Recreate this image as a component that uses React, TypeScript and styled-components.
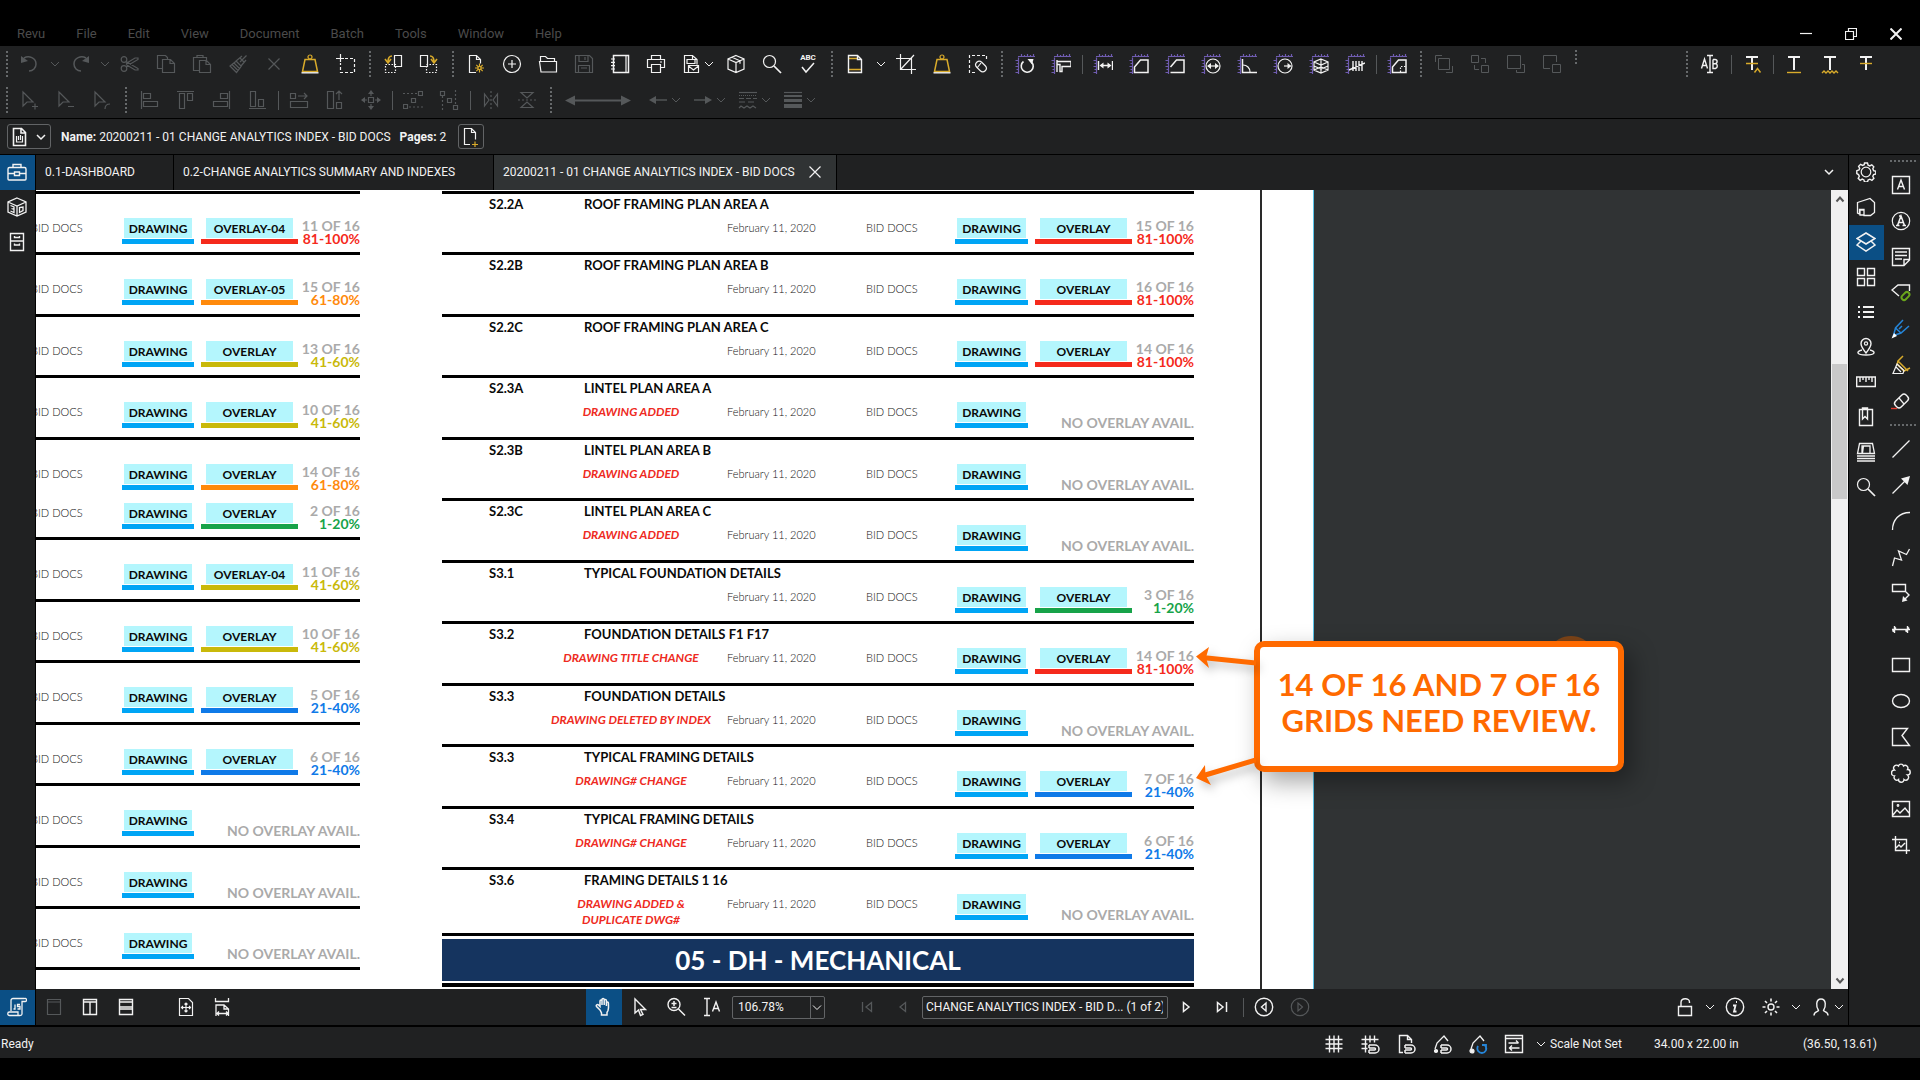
import React from 'react';
import styled, { createGlobalStyle, css } from 'styled-components';

const GOLD = '#d9ab2b';
const PURPLE = '#6f5cb0';
const DIM = '#55585a';

const GlobalStyle = createGlobalStyle`
  * { box-sizing: border-box; }
  body { margin: 0; background: #000; }
  button, input, select { font: inherit; color: inherit; }
`;

/* ---------- drawings ---------- */

const ruler = (
  <path
    stroke={PURPLE}
    strokeWidth="1.2"
    d="M3.5 20V3.5M3 2.5h17M0.5 6.5h3M1.5 9.5h2M0.5 12.5h3M1.5 15.5h2M0.5 18.5h3M6.5 0v2.500M9.500 1v1.500M12.500 0v2.500M15.500 1v1.500M18.500 0v2.500"
  />
);
const weight = (
  <>
    <path stroke={GOLD} strokeWidth="1.5" d="M5 5.500h10l2.500 12h-15z" />
    <circle stroke={GOLD} cx="10" cy="3" r="2" />
    <path strokeWidth="1.400" d="M1.500 18.800h17" />
  </>
);
const cursor = 'M3 2v14l4-4h6z';
const magnet = <path strokeWidth="1.500" d="M9 11h6a3.500 3.500 0 0 1 0 8H9M9 14h5.500a1 1 0 0 1 0 2H9M9 11v3M9 16v3" />;
const smallChevron = (x: number) => <path strokeWidth="1" d={`M${x} 8l4 4 4-4`} />;

const icons: Record<string, React.ReactNode> = {
  undo: <><path strokeWidth="1.500" d="M4 4c5-3 12 0 12 6 0 4-3 7-7 7" /><path fill="currentColor" stroke="none" d="M1 2v7l7-2z" /></>,
  redo: <><path strokeWidth="1.500" d="M16 4c-5-3-12 0-12 6 0 4 3 7 7 7" /><path fill="currentColor" stroke="none" d="M19 2v7l-7-2z" /></>,
  chevron: <path strokeWidth="1" d="M6 8l4 4 4-4" />,
  chevronBold: <path strokeWidth="1.500" d="M6 8l4 4 4-4" />,
  cut: <><circle cx="4" cy="5.500" r="2.800" /><circle cx="4" cy="14.500" r="2.800" /><path d="M6 7.500l12 7v1.500h-3L6 10.500M6 12.500l12-7V4h-3L6 9.500" /></>,
  copy: <path d="M6.500 14.500h-5v-13h8l2 2v2M6.500 5.500h8l4 4v9h-12zM14 5.500v4h4" />,
  paste: <path d="M7 16.500H1.500v-13H5V1.500h6v2h3.500V6M5 3.500h6M7.500 6.500h7l4 4v8h-11zM14 6.500v4h4" />,
  brush: <path d="M18.500 1.500L12 8M14 2L8 7l5 5 5-6M9 6.500L2 12l6.500 6.500L13.500 12M4 10.500l6 6M6 9l6 6M12 4l4 4" />,
  close: <path d="M4.500 4.500l11 11M15.500 4.500l-11 11" />,
  weight,
  snapshot: <><path d="M4.500 0v8M0 4.500h8" /><path strokeDasharray="3 2" d="M9 4.500h9.500v14h-14V9" /></>,
  sendBack: <><path d="M11.500 1.500h7v11h-7z" /><path strokeDasharray="1.500 1.500" d="M2.500 10.500h10v8h-10z" /><path stroke={GOLD} strokeWidth="1.600" d="M9 2C6 2 5 4 5 8M2 5l3 4 3-4" /></>,
  bringFront: <><path d="M1.500 1.500h7v11h-7z" /><path strokeDasharray="1.500 1.500" d="M7.500 10.500h10v8h-10z" /><path stroke={GOLD} strokeWidth="1.600" d="M11 2c3 0 4 2 4 6M12 5l3 4 3-4" /></>,
  newDoc: <><path d="M10 18.500H3.500v-17h7l4 4v4M10.500 1.500v4h4" /><path stroke={GOLD} d="M13.500 9.500v9M9 14h9M10.300 10.800l6.400 6.400M16.700 10.800l-6.400 6.400" /><circle fill="#202122" stroke={GOLD} cx="13.500" cy="14" r="1.600" /></>,
  plusCircle: <><circle cx="10" cy="10" r="8.500" /><path d="M10 6v8M6 10h8" /></>,
  folder: <path d="M2.500 7.500v-5h5l2 2h7v3M1.500 7.500h17v10.500h-15.500z" />,
  save: <path d="M1.500 1.500h14l3 3v14h-17zM5 1.500v6h9v-6M11 3v3M4.500 18.500v-7h11v7M7 14h6" />,
  notebook: <><path strokeWidth="1.500" d="M3.500 1.500h15v17h-15z" /><path d="M16 1.500v17M1 5h4M1 8.300h4M1 11.600h4M1 15h4" /></>,
  print: <path d="M5.500 6V1.500h9V6M5 13.500H1.500v-8h17v8H15M5.500 10.500h9v8h-9zM14 8h2" />,
  cube: <path d="M10 1.500l8 3.500v10l-8 3.500L2 15V5zM2 5l8 3.500L18 5M10 8.500v10M6 3.300l8 3.500v3" />,
  search: <><circle cx="7.500" cy="7.500" r="6" /><path strokeWidth="1.700" d="M12 12l7 7" /></>,
  spell: <path strokeWidth="1.500" d="M5 13l4 5 8-9" />,
  pageSetup: <><path stroke={GOLD} strokeWidth="1.600" d="M4 4.500h8M4 15.500h12" /><path strokeWidth="1.400" d="M3.500 1.500h9l4 4v13h-13zM12.500 1.500v4h4" /></>,
  crop: <path d="M4.500 0v15.500H20M0 4.500h15.500V20M5 15L18 1" />,
  eraseContent: <><path strokeDasharray="3 2" d="M7 18.500H1.500v-17h17V6" /><rect x="7" y="9" width="12" height="7" rx="3.500" transform="rotate(45 13 12.500)" /><path d="M13 9l-4 5" /></>,
  mRotate: <>{ruler}<path strokeWidth="1.600" d="M8.500 7.500a6 6 0 1 0 8 .5" /><path fill="currentColor" stroke="none" d="M12.500 5h6l-1.500 5.500z" /></>,
  mCaliper: <>{ruler}<path strokeWidth="1.400" d="M6 7.500h14v5H11v5h-2v-7H6M6 6v12" /></>,
  mLength: <>{ruler}<path strokeWidth="1.400" d="M5.500 7v9M19.500 7v9M8 11.500h9" /><path fill="currentColor" stroke="none" d="M6.500 11.500l4-3v6zM18.500 11.500l-4-3v6z" /></>,
  mArea: <>{ruler}<path strokeWidth="1.500" d="M5.500 18.500V13l6-7h7.500v12.500z" /></>,
  mPolyline: <>{ruler}<path strokeWidth="1.500" d="M5.500 13l6-7h7.500v12.500H5.500" /></>,
  mDiameter: <>{ruler}<circle cx="12" cy="12" r="7" /><path d="M7 12h10" /><path fill="currentColor" stroke="none" d="M6 12l4-3v6zM18 12l-4-3v6z" /></>,
  mAngle: <>{ruler}<path strokeWidth="1.500" d="M5.500 5v13.500H20" /><path d="M6 11c4 0 7 3 7 7" /></>,
  mRadius: <>{ruler}<circle cx="12" cy="12" r="7" /><path d="M11 12h5" /><path fill="currentColor" stroke="none" d="M18.500 12l-4-3v6z" /></>,
  mVolume: <>{ruler}<path d="M12 5l7 3v8l-7 3-7-3V8zM5 8l7 3 7-3M12 5v14M5 12l7 3 7-3M5 16l7-3 7 3" /></>,
  mCount: <>{ruler}<path strokeWidth="1.400" d="M8 7v10M11 7v10M14 7v10M17 7v10M4 16l16-7" /></>,
  mCutout: <>{ruler}<path strokeWidth="1.500" d="M5.500 18.500V13l6-7h7.500v12.500z" /><path strokeDasharray="1.500 1.500" d="M13.500 18v-5.500H19" /></>,
  bringForward: <path strokeWidth="1" d="M4.500 4.500h11v11h-11zM1.500 8V1.500H8M12 18.500h6.500V12" />,
  sendBackward: <path strokeWidth="1" d="M1.500 1.500h7v7h-7zM11.500 11.500h7v7h-7zM11 4.500h4.500V9M4.500 11v4.500H9" />,
  toFront: <path strokeWidth="1" d="M1.500 1.500h13v13h-13zM16 10.500h2.500v8h-8V16" />,
  toBack: <path strokeWidth="1" d="M14.500 8V1.500h-13v13H8M10.500 10.500h8v8h-8z" />,
  editText: <path strokeWidth="1.400" d="M7 1.500h6M7 18.500h6M10 1.500v17M1.500 14.500L4.500 5l3 9.500M2.500 11.500h4M13 5.500v9h2.500a2.500 2.500 0 0 0 0-4.800H13M15 9.700a2 2 0 0 0 0-4.200h-2" />,
  tReplace: <><path strokeWidth="2" d="M4 3h12M10 3v13" /><path stroke={GOLD} strokeWidth="1.400" d="M4 9.500h12M12.500 18.500l3-4 3 4" /></>,
  tUnder: <><path strokeWidth="2" d="M4 3h12M10 3v13" /><path stroke={GOLD} strokeWidth="1.400" d="M3 18.500h14" /></>,
  tSquiggle: <><path strokeWidth="2" d="M4 3h12M10 3v13" /><path stroke={GOLD} strokeWidth="1.400" d="M2 19l2-2 2 2 2-2 2 2 2-2 2 2 2-2 2 2" /></>,
  tStrike: <><path strokeWidth="2" d="M4 3h12M10 3v13" /><path stroke={GOLD} strokeWidth="1.400" d="M4 9.500h12" /></>,
  curPlus: <path d={`${cursor}M12 16.500h6M15 13.500v6`} />,
  curMinus: <path d={`${cursor}M12 16.500h6`} />,
  curLasso: <path d={`${cursor}M13 19c0-3 2-5 5-5`} />,
  alignLeft: <path d="M2.500 1v18M4.500 3.500h7v5h-7zM4.500 11.500h14v5h-14z" />,
  alignTop: <path d="M2 1.500h17M4.500 3.500h5v15h-5zM12.500 3.500h5v7h-5z" />,
  alignRight: <path d="M18.500 1v18M9.500 3.500h7v5h-7zM2.500 11.500h14v5h-14z" />,
  alignBottom: <path d="M2 18.500h17M3.500 1.500h5v15h-5zM11.500 9.500h5v7h-5z" />,
  sameWidth: <path d="M1.500 3.500h5v5h-5zM1.500 11.500h17v6h-17zM9 6h9M15 3l3 3-3 3" />,
  sameHeight: <path d="M2.500 1.500h6v17h-6zM11.500 12.500h5v6h-5zM14 10V1M11 4l3-3 3 3" />,
  moveAll: <><path d="M7.500 7.500h5v5h-5zM10 6V2M10 14v4M6 10H2M14 10h4" /><path fill="currentColor" stroke="none" d="M10 0l3 4H7zM10 20l3-4H7zM0 10l4-3v6zM20 10l-4-3v6z" /></>,
  distH: <><path d="M15.500 1.500h4v4h-4zM8.500 8.500h4v4h-4zM.5 14.500h4v4h-4z" /><path strokeDasharray="2 2" d="M0 3.500h15M6 17h14" /></>,
  distV: <><path d="M1.500 1.500h4v4h-4zM8.500 8.500h4v4h-4zM14.500 15.500h4v4h-4z" /><path strokeDasharray="2 2" d="M3.500 6v14M16.500 0v15" /></>,
  flipH: <><path d="M3.500 4v12L8 10zM16.500 4v12L12 10z" /><path strokeDasharray="2 2" d="M10 1v18" /></>,
  flipV: <><path d="M4 2.500h12L10 8zM4 17.500h12L10 12z" /><path strokeDasharray="2 2" d="M1 10h18" /></>,
  fileInfo: <><path strokeWidth="1.600" d="M4.500 1.500h8l4 4v13h-12zM12 1.500v4.500h4" /><path d="M7.500 9v6h6V9M9.500 9v4M11.500 8v5" /></>,
  addPage: <><path d="M10 17.500H4.500v-16h7l4 4v7M11.500 1.500v4h4" /><path stroke={GOLD} d="M12 17.500h6M15 14.500v6" /></>,
  briefcase: <path strokeWidth="1.400" d="M2.500 5.500h15a1.500 1.500 0 0 1 1.500 1.500v10a1 1 0 0 1-1 1H2a1 1 0 0 1-1-1V7a1.500 1.500 0 0 1 1.500-1.500zM6 5V2.500h8V5M1 11.500h6.500M12.500 11.500H19M7.500 10h5v3.500h-5z" />,
  model3d: <path strokeWidth="1.300" d="M10 1l9 4v10l-9 4-9-4V5zM1 5l9 4 9-4M10 9v10M3.500 8.500L7 10v5.500L3.500 14M4.500 11.500l2.500 1M12.500 10.500v5l3.500-2V10z" />,
  cabinet: <path strokeWidth="1.400" d="M3.500 1.500h13v17h-13zM3.500 9h13M7.500 4v1.500h5V4M7.500 11.500V13h5v-1.500" />,
  script: <path strokeWidth="1.300" d="M4 14V3.500C4 2 5 1.500 6 1.500h11.500a1.500 1.500 0 0 1 1 3H15V17c0 1-1 1.500-2 1.500H2.500a1.500 1.500 0 0 1 0-3.500H11v3M8 7.500V12H6.500M13 7.500h-2.500v2H13V12h-2.500" />,
  gear: <><circle cx="10" cy="10" r="4.800" /><path strokeWidth="1.400" d="M8.500 1h3l.6 2.200 1.700.7 2-1.100 2 2-1 2 .8 1.800 2.200.6v2.800l-2.200.6-.8 1.700 1.100 2-2 2-2-1.100-1.800.8-.6 2h-3l-.6-2.100-1.700-.8-2 1.200-2-2 1.100-2-.8-1.700L.8 11.500V8.700L3 8l.7-1.700-1.100-2 2-2 2 1.100 1.600-.7z" /></>,
  properties: <path strokeWidth="1.300" d="M1.500 5.500L14 1.500l4.500 4v10l-4 3H8v-6H3.500V17l-2-1zM4 13h4v5H4z" />,
  layers: <path strokeWidth="1.500" d="M10 1l9 5.500-9 5.500-9-5.500zM4.500 9.500L1 13l9 6 9-6-3.500-3.500" />,
  thumbs: <path strokeWidth="1.400" d="M1.500 1.500h7v7h-7zM11.500 1.500h7v7h-7zM1.500 11.500h7v7h-7zM11.500 11.500h7v7h-7z" />,
  list: <path strokeWidth="2" d="M2 5h2M2 10h2M2 15h2M7 5h11M7 10h11M7 15h11" />,
  pin: <><path strokeWidth="1.400" d="M10 16C6 11 5 9 5 6.500a5 5 0 0 1 10 0C15 9 14 11 10 16zM6 13c-6 1.500-6 5 4 5s10-3.500 4-5" /><circle cx="10" cy="6.500" r="1.600" /></>,
  measure: <path strokeWidth="1.400" d="M.7 5h18.600v9.500H.7zM4 5v5M7 5v3M10 5v5M13 5v3M16 5v5" />,
  bookmark: <path strokeWidth="1.400" d="M3.500 2.500h13v16h-13zM6.500 1v11l2.500-2.500 2.500 2.500V1z" />,
  stack: <path strokeWidth="1.300" d="M3.500 1.500h13l2 10h-17zM6 11V4h8v7M7.500 4l-1 7M1 14h18M1 16.500h18M1 19h18" />,
  textBox: <path strokeWidth="1.400" d="M1.500 1.500h17v17h-17zM6.500 14.500L10 5l3.500 9.500M7.700 11.500h4.600" />,
  typewriter: <><circle cx="10" cy="10" r="8.700" /><path strokeWidth="1.500" d="M6.500 14.500L10 5l3.500 9.500M7.700 11.500h4.600M5 14.500h3.500M11.500 14.500H15M8 5h2" /></>,
  note: <path strokeWidth="1.400" d="M1.500 1.500h17V13l-5.500 5.500H1.500zM18 12.500h-5V18M4 5h12M4 8.500h12M4 12h7" />,
  tag: <><path strokeWidth="1.400" d="M18.500 8V2H7L1 7l7 6" /><rect stroke="#6aa51c" strokeWidth="2" x="10" y="10.500" width="9" height="5" rx="2.500" transform="rotate(-45 14.500 13)" /></>,
  pen: <><path stroke="#2585d8" strokeWidth="1.500" d="M12 1L4.500 9l-2 7.500L10 14l8-7M4.500 9L10 14M8 10l3-3" /><path fill="#fff" stroke="none" d="M3 14l3 3-5.500 2.500z" /></>,
  highlighter: <><path stroke={GOLD} strokeWidth="1.500" d="M12 1L7 6l10 10M7 6l-1 4M19 13l-6 3L6 9" /><path d="M6 9l-4 9.500h10l1-3zM5 12l5 5" /></>,
  eraser: <><rect strokeWidth="1.400" x="3" y="6" width="15" height="8" rx="3" transform="rotate(-45 10.500 10)" /><path d="M8 7l5 6" /><path stroke="#e0392c" strokeWidth="1.400" d="M0 17.500h6" /></>,
  line: <path strokeWidth="1.300" d="M1.500 18.500l17-17" />,
  arrow: <><path strokeWidth="1.300" d="M1.500 18.500L14 6" /><path fill="currentColor" stroke="none" d="M19 1l-2.500 9-6.500-6.500z" /></>,
  arc: <path strokeWidth="1.300" d="M1.500 19C1.500 9 8 1.500 19 1.500" />,
  polyline: <path strokeWidth="1.300" d="M1.500 19l2-8 7 2-3-9 8 3.500L18.500 2" />,
  callout: <><path strokeWidth="1.400" d="M1.500 1.500h13v7h-13zM15 9l3 3-4 4" /><path fill="currentColor" stroke="none" d="M11 19l1-6 4.500 4.500z" /></>,
  dimension: <path strokeWidth="1.400" d="M1 10.500h18M3.500 7v7M16.500 7v7M1.500 12.500L5 8.500M14.500 12.500L18 8.500" />,
  rect: <path strokeWidth="1.400" d="M1.500 3.500h17v13h-17z" />,
  ellipse: <ellipse strokeWidth="1.400" cx="10" cy="10" rx="8.500" ry="6.500" />,
  polygon: <path strokeWidth="1.400" d="M1.500 1.500h15l-5.500 7 7.500 10h-17z" />,
  cloud: <path strokeWidth="1.400" d="M7.500 3a2.600 2.600 0 0 1 5 0 2.700 2.700 0 0 1 4 3.500 2.600 2.600 0 0 1 0 5.500 2.700 2.700 0 0 1-3.500 4.500 2.600 2.600 0 0 1-5.500 0A2.700 2.700 0 0 1 3.500 13a2.600 2.600 0 0 1 0-6 2.700 2.700 0 0 1 4-4z" />,
  image: <><path strokeWidth="1.400" d="M1.500 2.500h17v15h-17zM2 16l4-5 3 3 5-5 4 5" /><circle cx="7" cy="6.500" r=".8" /></>,
  imageCrop: <path strokeWidth="1.400" d="M4.500 1v14.500H19M1 4.500h14.500V19M5 13l3-3 2 2 4-4M8 7.500h1" />,
  single: <path d="M3.500 2.500h13v15h-13zM3.500 5h13" />,
  splitV: <path strokeWidth="1.400" d="M3.500 2.500h13v15h-13zM3.500 5h13M10 5v12.500" />,
  splitH: <path strokeWidth="1.400" d="M3.500 2.500h13v15h-13zM3.500 5h13M3.500 10h13M3.500 12h13" />,
  fitPage: <path d="M3.500 1.500h9l4 4v13h-13zM10 6v9M5.500 10.500h9M8.500 7.500L10 6l1.500 1.500M8.500 13.500L10 15l1.500-1.500M7 9l-1.500 1.500L7 12M13 9l1.500 1.500L13 12" />,
  fitWidth: <path strokeWidth="1.300" d="M3.500 1v3.500h13V1M4 19V8h8l4.500 4v7M12 8v4h4M5 16.500h11M7 14.500l-2 2 2 2M14 14.500l2 2-2 2" />,
  hand: <path strokeWidth="1.500" d="M6 13L2.500 9.500c-1-1.500 1-2.500 2-1.500L6 9.500V4c0-1.500 2-1.500 2 0v4-5.500c0-1.500 2.200-1.500 2.200 0V8 3.500c0-1.500 2.200-1.500 2.200 0V9 6c0-1.500 2-1.500 2 0 0 3 .6 4.500-.4 7.500l-1 2V18H7.500v-2z" />,
  pointer: <path strokeWidth="1.400" d="M5 2v14l3.500-3 2 5.500 2.500-1-2.500-5h5z" />,
  zoom: <><circle strokeWidth="1.400" cx="8" cy="7.500" r="6" /><path strokeWidth="1.500" d="M12.500 12l6.500 6.500M5.500 6.500h5M8 4v5M5.500 10.500h5" /></>,
  textSelect: <path strokeWidth="1.400" d="M2 1.500h6M2 18.500h6M5 1.500v17M10.500 14.500l3.500-9.500 3.500 9.500M11.700 11.500h4.600" />,
  first: <path strokeWidth="1.300" d="M5.500 5v10M14.500 5.500v9L9 10z" />,
  prev: <path strokeWidth="1.300" d="M12.500 5.500v9L7 10z" />,
  next: <path strokeWidth="1.500" d="M7.500 5.500v9L13 10z" />,
  last: <path strokeWidth="1.500" d="M14.500 5v10M5.500 5.500v9L11 10z" />,
  back: <><circle strokeWidth="1.400" cx="10" cy="10" r="8.700" /><path strokeWidth="1.400" d="M12 6v8l-4.500-4z" /></>,
  forward: <><circle cx="10" cy="10" r="8.700" /><path d="M8 6v8l4.500-4z" /></>,
  unlock: <path strokeWidth="1.400" d="M3.500 9.500h13v9h-13zM6 9V5.500c0-5 8.500-5 8.500-.5v1" />,
  info: <><circle strokeWidth="1.400" cx="10" cy="10" r="8.700" /><path strokeWidth="1.800" d="M8 8.500h2.500L9 14.500h2.500M11 5h1" /></>,
  sun: <><circle strokeWidth="1.400" cx="10" cy="10" r="3" /><path strokeWidth="1.600" d="M10 1.500v3M10 15.500v3M1.500 10h3M15.500 10h3M4 4l2 2M14 14l2 2M16 4l-2 2M6 14l-2 2" /></>,
  grid: <path strokeWidth="1.400" d="M5.500 1.500v17M10 1.500v17M14.500 1.500v17M1.500 5.500h17M1.500 10h17M1.500 14.500h17" />,
  snapGrid: <><path strokeWidth="1.400" d="M5.500 1.500v17M10 1.500v7M14.500 1.500v7M1.500 5.500h17M1.500 10h6M1.500 14.500h6" />{magnet}</>,
  snapPage: <><path strokeWidth="1.400" d="M7 18.500H3.500v-17h8l4 4V9M11.500 1.500v4h4" />{magnet}</>,
  snapMarkup: <><path strokeWidth="1.300" d="M3 15l2-6 7-7 4 5M2 17h4" /><circle fill="currentColor" cx="4" cy="17" r="1.500" />{magnet}</>,
  reuse: <><path strokeWidth="1.300" d="M3 15l2-6 7-7 4 5" /><circle fill="currentColor" cx="4" cy="17" r="2" /><path stroke="#2585d8" strokeWidth="1.800" d="M10 12c-2 4 1 7 4 7s6-4 3-7.500M14 11h4v4" /></>,
  sync: <path strokeWidth="1.400" d="M1.500 1.500h17v17h-17zM1.500 4.500h17M4.500 9h10M12 6.500L14.500 9M15.500 14h-10M8 11.500L5.500 14 8 16.500" />,
};

const wideIcons: Record<string, React.ReactNode> = {
  pdfMail: <><path d="M18 18.500h-7.500v-17h8l4.500 4v5M18.500 1.500v4h4M13 5.500h8v4h-8zM14.500 11.500h10v7h-10zM14.500 12l5 4 5-4" />{smallChevron(31)}</>,
  lineLeft: <><path strokeWidth="1.400" d="M13 10h14" /><path fill="currentColor" stroke="none" d="M9 10l7-4v8z" />{smallChevron(32)}</>,
  lineRight: <><path strokeWidth="1.400" d="M9 10h14" /><path fill="currentColor" stroke="none" d="M27 10l-7-4v8z" />{smallChevron(32)}</>,
  lineStyle: <><path d="M9 2.500h18" /><path strokeDasharray="1 1" d="M9 5.500h18" /><path strokeDasharray="5 2" d="M9 8.500h18" /><path strokeDasharray="6 3" d="M9 12h18" /><path d="M9 18l2-2 3 2 3-2 3 2 3-2 3 2" />{smallChevron(32)}</>,
  lineWidth: <><path d="M9 2.500h18" /><path strokeWidth="2" d="M9 6h18" /><path strokeWidth="3" d="M9 10.500h18" /><path strokeWidth="4" d="M9 16h18" />{smallChevron(32)}</>,
  user: <><path strokeWidth="1.400" d="M11 18.500c0-4 4-3.500 4.500-5C13 10 12.500 2 18 2s5 8 2.500 11.500c.5 1.500 4.500 1 4.500 5" />{smallChevron(32)}</>,
};

/* ---------- shared parts ---------- */

const Svg = styled.svg`
  display: block;
  flex: none;
  fill: none;
  stroke: currentColor;
  stroke-width: 1.2;
`;

/* The 35px buttons get one pixel of padding, so that the icon stays on whole pixels. */
const IconButton = styled.button<{ $w?: number; $h?: number; $dim?: boolean; $active?: boolean }>`
  display: flex;
  flex: none;
  align-items: center;
  justify-content: center;
  width: ${(p) => p.$w ?? 36}px;
  height: ${(p) => p.$h ?? 36}px;
  padding: 0 ${(p) => (p.$h === 35 ? 1 : 0)}px ${(p) => (p.$h === 35 ? 1 : 0)}px 0;
  border: 0;
  background: ${(p) => (p.$active ? '#0b4f85' : 'transparent')};
  color: ${(p) => (p.$dim ? DIM : '#f2f2f2')};
`;

type ToolProps = { name: string; w?: number; h?: number; dim?: boolean; active?: boolean };

function Tool({ name, w, h, dim, active }: ToolProps) {
  const wide = name in wideIcons;
  const isSpell = name === 'spell';
  const size = wide ? 45 : 20;
  return (
    <IconButton type="button" aria-label={name} $w={w ?? (wide ? 45 : 36)} $h={h} $dim={dim} $active={active}>
      {isSpell ? (
        <Spell>
          ABC
          <Svg width={16} height={12} viewBox="3 8 16 12">{icons.spell}</Svg>
        </Spell>
      ) : (
        <Svg width={size} height={20} viewBox={`0 0 ${size} 20`}>{wide ? wideIcons[name] : icons[name]}</Svg>
      )}
    </IconButton>
  );
}

const Spell = styled.span`
  display: flex;
  flex-direction: column;
  align-items: center;
  font: 700 8px/8px Roboto, sans-serif;
`;

const Grip = styled.span<{ $across?: boolean; $short?: boolean }>`
  flex: none;
  ${(p) =>
    p.$across
      ? css`width: 26px; height: 2px; margin: 5px auto;
          background: repeating-linear-gradient(90deg, #66696b 0 2px, transparent 2px 4px);`
      : css`width: 2px; height: ${p.$short ? 14 : 26}px; margin: 0 4px 0 5px;
          align-self: ${p.$short ? 'flex-start' : 'center'};
          background: repeating-linear-gradient(180deg, #66696b 0 2px, transparent 2px 4px);`}
`;

const Divider = styled.span`
  flex: none;
  width: 1px;
  height: 19px;
  margin: 0 2px 0 3px;
  background: #55585a;
`;

/** Expands a compact description: "|" divider, ":" grip, "~x" dimmed, "x@n" custom width. */
function Tools({ items, dim }: { items: string; dim?: boolean }) {
  return (
    <>
      {items.split(' ').map((raw, i) => {
        if (raw === '|') return <Divider key={i} />;
        if (raw === ':') return <Grip key={i} />;
        const [label, w] = raw.replace('~', '').split('@');
        return <Tool key={i} name={label} w={w ? Number(w) : undefined} dim={dim || raw.startsWith('~')} />;
      })}
    </>
  );
}

/* ---------- window frame ---------- */

const Window = styled.div`
  display: flex;
  flex-direction: column;
  height: 100vh;
  padding: 22px 0;
  overflow: hidden;
  background: #000;
  color: #f2f2f2;
  font: 12px/16px Roboto, sans-serif;
`;

const TitleBar = styled.header`
  display: flex;
  flex: none;
  align-items: center;
  justify-content: space-between;
  height: 24px;
`;

const Menu = styled.nav`
  display: flex;
  gap: 31px;
  padding-left: 17px;
`;

const MenuItem = styled.button`
  padding: 0;
  border: 0;
  background: none;
  color: #4b4b4b;
  font-size: 13px;
`;

const WindowButtons = styled.div`
  display: flex;
  gap: 9px;
  padding-right: 6px;
`;

const Toolbars = styled.div`
  flex: none;
  background: #202122;
  border-bottom: 1px solid #000;
`;

const ToolRow = styled.div`
  display: flex;
  align-items: center;
  height: 36px;
  padding-left: 1px;
`;

const GripSlot = styled.span`
  display: flex;
  align-self: stretch;
  padding-top: 4px;
`;

const TextTools = styled.div`
  display: flex;
  align-items: center;
  margin-left: auto;
  padding-right: 36px;
`;

const NameBar = styled.div`
  display: flex;
  flex: none;
  align-items: center;
  height: 36px;
  padding-left: 7px;
  background: #202122;
  border-bottom: 1px solid #000;
  white-space: pre;
`;

const Framed = styled.button<{ $w: number }>`
  display: flex;
  align-items: center;
  justify-content: space-between;
  width: ${(p) => p.$w}px;
  height: 25px;
  padding: 0 2px 0 1px;
  border: 1px solid #626466;
  border-radius: 3px;
  background: transparent;
`;

const NameText = styled.span`
  margin: 0 12px 0 10px;
  b { font-weight: 700; }
`;

const Body = styled.div`
  display: flex;
  flex: 1;
  min-height: 0;
`;

const Rail = styled.aside<{ $side: 'left' | 'right' }>`
  display: flex;
  flex: none;
  flex-direction: column;
  width: 36px;
  background: #202122;
  border-right: ${(p) => (p.$side === 'left' ? '1px solid #000' : '0')};
`;

const RightRails = styled.div`
  display: flex;
  flex: none;
  width: 72px;
  border-left: 1px solid #000;
  background: #202122;
`;

const Spacer = styled.span`
  flex: 1;
`;

const Center = styled.div`
  display: flex;
  flex: 1;
  flex-direction: column;
  min-width: 0;
`;

const TabBar = styled.div`
  display: flex;
  flex: none;
  align-items: stretch;
  height: 35px;
  background: #202122;
`;

const Tab = styled.div<{ $active?: boolean }>`
  display: flex;
  align-items: center;
  padding: 0 ${(p) => (p.$active ? 0 : 37)}px 0 9px;
  border-right: 1px solid #000;
  background: ${(p) => (p.$active ? '#303334' : 'transparent')};
  white-space: nowrap;
`;

const TabLabel = styled.button`
  padding: 0 1px 1px 0;
  border: 0;
  background: none;
`;

/* ---------- document ---------- */

const Viewer = styled.main`
  position: relative;
  display: flex;
  flex: 1;
  min-height: 0;
  overflow: hidden;
  background: #303334;
`;

const Page = styled.article`
  display: flex;
  flex: none;
  height: 100%;
  overflow: hidden;
  background: #fff;
  border-right: 1px solid #58c4ea;
  color: #0a0a0a;
  font: 14px/20px Lato, sans-serif;
`;

const Sheet = styled.div`
  display: flex;
  gap: 82px;
  align-items: flex-start;
  margin-right: 51px;
  padding: 1px 66px 0 0;
  border-right: 2px solid #2a2a2a;
`;

const List = styled.table`
  display: block;
  border-spacing: 0;
  tbody, tfoot { display: block; }
`;

const Row = styled.tr<{ $h: number; $narrow?: boolean; $sub?: boolean }>`
  display: grid;
  grid-template-columns: ${(p) => (p.$narrow ? '86px 72px' : '108px 162px 154px 89px 73px')} 104px 62px;
  grid-template-rows: ${(p) => (p.$sub ? '' : '20px')} 1fr;
  height: ${(p) => p.$h}px;
  border-top: ${(p) => (p.$sub ? '0' : '3px solid #000')};
  td { padding: 0; }
`;

const NumberCell = styled.td`
  && { padding-left: 47px; }
  font-weight: 700;
  font-size: 13px;
`;

const TitleCell = styled.td<{ $span: number }>`
  grid-column: span ${(p) => p.$span};
  && { padding-left: ${(p) => (p.$span > 4 ? 34 : 0)}px; }
  font-weight: 700;
  font-size: 13px;
`;

const NoteCell = styled.td`
  grid-column: 2;
  && { padding-top: 6px; }
  color: #ee2a22;
  font: italic 700 12px/16px Lato, sans-serif;
  text-align: center;
  white-space: pre;
`;

const SmallCell = styled.td<{ $inset?: number }>`
  text-indent: ${(p) => p.$inset ?? 0}px;
  color: #111;
  font-weight: 300;
  font-size: 11px;
  line-height: 28px;
  white-space: nowrap;
`;

const LinkCell = styled.td`
  && { padding-top: 4px; }
`;

const OverlayCell = styled.td`
  && { padding-top: 4px; padding-left: 7px; }
`;

const Tag = styled.a<{ $line: string; $wide?: boolean }>`
  display: block;
  padding: 0 ${(p) => (p.$wide ? 5 : 2)}px 1px;
  border-bottom: 5px solid ${(p) => p.$line};
  color: inherit;
  font-weight: 700;
  font-size: 12px;
  text-align: center;
  text-decoration: none;
  span {
    display: block;
    padding-top: 2px;
    background: #b4f6fd;
    line-height: 18px;
  }
`;

const CountCell = styled.td`
  && { padding-top: 5px; }
  color: #aaa;
  font-weight: 700;
  line-height: 13px;
  text-align: right;
  white-space: nowrap;
`;

const Percent = styled.div<{ $color: string }>`
  color: ${(p) => p.$color};
`;

const NoneCell = styled.td`
  grid-column: span 2;
  && { padding-top: 15px; }
  color: #aaa;
  font-weight: 700;
  text-align: right;
`;

const Section = styled.h2`
  margin: 3px 0 2px;
  background: #15345f;
  color: #fff;
  font: 700 26px/42px Lato, sans-serif;
  text-align: center;
`;

const Rule = styled.div<{ $h: number }>`
  height: ${(p) => p.$h}px;
  background: #000;
`;

const LEVELS: Record<string, string> = {
  '81-100%': '#f52a1c',
  '61-80%': '#ff8a0c',
  '41-60%': '#c9b90a',
  '21-40%': '#0f7ae8',
  '1-20%': '#17a349',
};

type Review = { label?: string; count?: number; level?: string };

function ReviewCells({ label = 'OVERLAY', count, level }: Review) {
  return (
    <>
      <LinkCell>
        <Tag href="#drawing" $line="#00a5f5"><span>DRAWING</span></Tag>
      </LinkCell>
      {level ? (
        <>
          <OverlayCell>
            <Tag href="#overlay" $line={LEVELS[level]} $wide><span>{label}</span></Tag>
          </OverlayCell>
          <CountCell>
            {count} OF 16
            <Percent $color={LEVELS[level]}>{level}</Percent>
          </CountCell>
        </>
      ) : (
        <NoneCell>NO OVERLAY AVAIL.</NoneCell>
      )}
    </>
  );
}

const leftRows: (Review & { h: number; sub?: boolean })[] = [
  { h: 61, label: 'OVERLAY-04', count: 11, level: '81-100%' },
  { h: 62, label: 'OVERLAY-05', count: 15, level: '61-80%' },
  { h: 61, count: 13, level: '41-60%' },
  { h: 62, count: 10, level: '41-60%' },
  { h: 62, count: 14, level: '61-80%' },
  { h: 38, count: 2, level: '1-20%', sub: true },
  { h: 62, label: 'OVERLAY-04', count: 11, level: '41-60%' },
  { h: 61, count: 10, level: '41-60%' },
  { h: 62, count: 5, level: '21-40%' },
  { h: 61, count: 6, level: '21-40%' },
  { h: 62 },
  { h: 61 },
  { h: 61 },
];

const rightRows: (Review & { no: string; title: string; note?: string; h: number })[] = [
  { h: 61, no: 'S2.2A', title: 'ROOF FRAMING PLAN AREA A', count: 15, level: '81-100%' },
  { h: 62, no: 'S2.2B', title: 'ROOF FRAMING PLAN AREA B', count: 16, level: '81-100%' },
  { h: 61, no: 'S2.2C', title: 'ROOF FRAMING PLAN AREA C', count: 14, level: '81-100%' },
  { h: 62, no: 'S2.3A', title: 'LINTEL PLAN AREA A', note: 'DRAWING ADDED' },
  { h: 61, no: 'S2.3B', title: 'LINTEL PLAN AREA B', note: 'DRAWING ADDED' },
  { h: 62, no: 'S2.3C', title: 'LINTEL PLAN AREA C', note: 'DRAWING ADDED' },
  { h: 61, no: 'S3.1', title: 'TYPICAL FOUNDATION DETAILS', count: 3, level: '1-20%' },
  { h: 62, no: 'S3.2', title: 'FOUNDATION DETAILS F1 F17', note: 'DRAWING TITLE CHANGE', count: 14, level: '81-100%' },
  { h: 61, no: 'S3.3', title: 'FOUNDATION DETAILS', note: 'DRAWING DELETED BY INDEX' },
  { h: 62, no: 'S3.3', title: 'TYPICAL FRAMING DETAILS', note: 'DRAWING# CHANGE', count: 7, level: '21-40%' },
  { h: 61, no: 'S3.4', title: 'TYPICAL FRAMING DETAILS', note: 'DRAWING# CHANGE', count: 6, level: '21-40%' },
  { h: 66, no: 'S3.6', title: 'FRAMING DETAILS 1 16', note: 'DRAWING ADDED &\nDUPLICATE DWG#' },
];

/* ---------- callout over the page ---------- */

const Callout = styled.aside`
  position: absolute;
  top: 451px;
  left: 1218px;
  width: 370px;
  height: 131px;
  padding-top: 19px;
  border: 6px solid #ff6a00;
  border-radius: 10px;
  background: #fff;
  box-shadow: 8px 10px 24px rgba(0, 0, 0, 0.35);
  color: #ff6a00;
  font: 700 31px/36px Lato, sans-serif;
  text-align: center;
  white-space: nowrap;
`;

const Arrows = styled.svg`
  position: absolute;
  top: 451px;
  left: 1158px;
  filter: drop-shadow(4px 5px 5px rgba(0, 0, 0, 0.25));
`;

const Glow = styled.span`
  position: absolute;
  top: 446px;
  left: 1518px;
  width: 34px;
  height: 20px;
  border-radius: 50%;
  background: #7d4418;
`;

/* ---------- scroll bar, bottom bars ---------- */

const ScrollTrack = styled.div`
  display: flex;
  flex: none;
  flex-direction: column;
  align-items: center;
  width: 17px;
  margin-left: auto;
  background: #f0f0f0;
`;

const ScrollThumb = styled.div`
  width: 15px;
  height: 135px;
  margin-top: 156px;
  background: #c9c9c9;
`;

const ScrollButton = styled.button<{ $down?: boolean }>`
  display: flex;
  justify-content: center;
  width: 17px;
  height: 18px;
  padding: 4px 0 0;
  border: 0;
  background: none;
  color: #555;
  margin-top: ${(p) => (p.$down ? 'auto' : '0')};
`;

const BottomBar = styled.div`
  display: grid;
  grid-template-columns: 1fr auto 1fr;
  flex: none;
  align-items: center;
  height: 36px;
  background: #202122;
`;

const Group = styled.div<{ $end?: boolean; $shift?: number }>`
  display: flex;
  align-items: center;
  justify-content: ${(p) => (p.$end ? 'flex-end' : 'flex-start')};
  margin-left: ${(p) => p.$shift ?? 0}px;
`;

const ZoomBox = styled.div`
  display: flex;
  width: 93px;
  height: 23px;
  margin: 0 24px 0 2px;
  border: 1px solid #626466;
  border-radius: 2px;
`;

const ZoomSelect = styled.select`
  flex: 1;
  min-width: 0;
  padding: 0 5px;
  border: 0;
  border-right: 1px solid #626466;
  appearance: none;
  background: transparent;
`;

const PageInput = styled.input`
  width: 246px;
  height: 23px;
  margin-left: 1px;
  padding: 0 4px 0 3px;
  border: 1px solid #626466;
  border-radius: 2px;
  background: transparent;
`;

const StatusBar = styled.footer`
  display: flex;
  flex: none;
  align-items: center;
  height: 33px;
  padding: 2px 0 0 1px;
  border-top: 2px solid #000;
  background: #202122;
`;

const StatusText = styled.span<{ $w?: number }>`
  width: ${(p) => (p.$w ? `${p.$w}px` : 'auto')};
  white-space: nowrap;
`;

const panelTabs = ['gear', 'properties', 'layers', 'thumbs', 'list', 'pin', 'measure', 'bookmark', 'stack', 'search'];
const markupTop = ['textBox', 'typewriter', 'note', 'tag', 'pen', 'highlighter', 'eraser'];
const markupRest = ['line', 'arrow', 'arc', 'polyline', 'callout', 'dimension', 'rect', 'ellipse', 'polygon', 'cloud', 'image', 'imageCrop'];

export default function App() {
  return (
    <Window>
      <GlobalStyle />
      <TitleBar>
        <Menu>
          {['Revu', 'File', 'Edit', 'View', 'Document', 'Batch', 'Tools', 'Window', 'Help'].map((m) => (
            <MenuItem key={m} type="button">{m}</MenuItem>
          ))}
        </Menu>
        <WindowButtons>
          <IconButton type="button" aria-label="Minimize" $h={24}>
            <Svg width={12} height={12} viewBox="0 0 12 12"><path d="M0 5.500h12" /></Svg>
          </IconButton>
          <IconButton type="button" aria-label="Restore" $h={24}>
            <Svg width={12} height={12} viewBox="0 0 12 12"><path d="M.5 3.500h8v8h-8zM3.500 3V.5h8v8H9" /></Svg>
          </IconButton>
          <IconButton type="button" aria-label="Close" $h={24}>
            <Svg width={12} height={12} viewBox="0 0 12 12"><path strokeWidth="2" d="M.5.5l11 11M11.500.5l-11 11" /></Svg>
          </IconButton>
        </WindowButtons>
      </TitleBar>

      <Toolbars>
        <ToolRow>
          <Tools items=": ~undo ~chevron@14 ~redo ~chevron@14 ~cut ~copy ~paste ~brush ~close weight snapshot : sendBack bringFront : newDoc plusCircle folder ~save notebook print pdfMail@44 cube search spell : pageSetup chevron@15 crop weight eraseContent : mRotate mCaliper | mLength mArea mPolyline mDiameter mAngle mRadius mVolume mCount | mCutout : ~bringForward ~sendBackward ~toFront ~toBack" />
          <GripSlot><Grip $short /></GripSlot>
          <TextTools>
            <Tools items=": editText | tReplace | tUnder tSquiggle tStrike" />
          </TextTools>
        </ToolRow>
        <ToolRow>
          <Tools dim items=": curPlus curMinus curLasso : alignLeft alignTop alignRight alignBottom | sameWidth sameHeight moveAll | distH distV | flipH flipV :" />
          <IconButton type="button" aria-label="Line ends" $w={84} $dim>
            <Svg width={66} height={20} viewBox="0 0 66 20">
              <path strokeWidth="2" d="M8 10.500h50" />
              <path fill="currentColor" stroke="none" d="M0 10.500l10-5v10zM66 10.500l-10-5v10z" />
            </Svg>
          </IconButton>
          <Tools dim items="lineLeft lineRight lineStyle lineWidth" />
        </ToolRow>
      </Toolbars>

      <NameBar>
        <Framed type="button" aria-label="File" $w={44}>
          <Svg width={20} height={20} viewBox="0 0 20 20">{icons.fileInfo}</Svg>
          <Svg width={14} height={20} viewBox="3 0 14 20">{icons.chevronBold}</Svg>
        </Framed>
        <NameText>
          <b>Name:</b> 20200211 - 01 CHANGE ANALYTICS INDEX - BID DOCS{'   '}<b>Pages:</b> 2
        </NameText>
        <Framed type="button" aria-label="Add page" $w={26}>
          <Svg width={20} height={20} viewBox="0 0 20 20">{icons.addPage}</Svg>
        </Framed>
      </NameBar>

      <Body>
        <Rail $side="left">
          <Tool name="briefcase" w={35} h={35} active />
          <Tool name="model3d" w={35} h={35} />
          <Tool name="cabinet" w={35} h={35} />
          <Spacer />
          <Tool name="script" w={35} h={35} active />
        </Rail>

        <Center>
          <TabBar>
            <Tab><TabLabel type="button">0.1-DASHBOARD</TabLabel></Tab>
            <Tab><TabLabel type="button">0.2-CHANGE ANALYTICS SUMMARY AND INDEXES</TabLabel></Tab>
            <Tab $active>
              <TabLabel type="button">20200211 - 01 CHANGE ANALYTICS INDEX - BID DOCS</TabLabel>
              <Tool name="close" w={40} h={35} />
            </Tab>
            <Spacer />
            <Tool name="chevronBold" w={37} h={35} />
          </TabBar>

          <Viewer>
            <Page>
              <Sheet>
                <List>
                  <tbody>
                    {leftRows.map((r, i) => (
                      <Row key={i} $h={r.h} $narrow $sub={r.sub}>
                        {!r.sub && <TitleCell $span={4} />}
                        <SmallCell $inset={-5}>BID DOCS</SmallCell>
                        <ReviewCells {...r} />
                      </Row>
                    ))}
                  </tbody>
                  <tfoot><Row $h={3} $narrow /></tfoot>
                </List>
                <div>
                  <List>
                    <tbody>
                      {rightRows.map((r, i) => (
                        <Row key={i} $h={r.h}>
                          <NumberCell>{r.no}</NumberCell>
                          <TitleCell $span={6}>{r.title}</TitleCell>
                          <NoteCell>{r.note}</NoteCell>
                          <SmallCell $inset={15}>February 11, 2020</SmallCell>
                          <SmallCell>BID DOCS</SmallCell>
                          <ReviewCells {...r} />
                        </Row>
                      ))}
                    </tbody>
                  </List>
                  <Rule $h={3} />
                  <Section>05 - DH - MECHANICAL</Section>
                  <Rule $h={4} />
                </div>
              </Sheet>
            </Page>
            <Glow />
            <Callout>
              14 OF 16 AND 7 OF 16
              <br />
              GRIDS NEED REVIEW.
            </Callout>
            <Arrows width="62" height="150" viewBox="0 0 62 150" fill="#ff6a00">
              <path stroke="#ff6a00" strokeWidth="5" d="M8 16.500L62 22M8 135L62 119" />
              <path d="M2 15.500L15 6l-3 10.500L15 27zM2 137l9-13 .5 10L17 144z" />
            </Arrows>
            <ScrollTrack>
              <ScrollButton type="button" aria-label="Scroll up">
                <Svg width={10} height={10} viewBox="0 0 10 10"><path strokeWidth="2" d="M1.500 7.500L5 3.500l3.500 4" /></Svg>
              </ScrollButton>
              <ScrollThumb />
              <ScrollButton type="button" aria-label="Scroll down" $down>
                <Svg width={10} height={10} viewBox="0 0 10 10"><path strokeWidth="2" d="M1.500 3.500L5 7.500l3.500-4" /></Svg>
              </ScrollButton>
            </ScrollTrack>
          </Viewer>

          <BottomBar>
            <Group>
              <Tools items="~single splitV splitH" />
              <Group $shift={24}><Tools items="fitPage fitWidth" /></Group>
            </Group>
            <Group $shift={20}>
              <Tool name="hand" active />
              <Tools items="pointer zoom textSelect" />
              <ZoomBox>
                <ZoomSelect aria-label="Zoom"><option>106.78%</option></ZoomSelect>
                <Svg width={13} height={21} viewBox="4 0 13 20">{icons.chevron}</Svg>
              </ZoomBox>
              <Tools items="~first ~prev" />
              <PageInput aria-label="Page" defaultValue="CHANGE ANALYTICS INDEX - BID D... (1 of 2)" />
              <Tools items="next last | back ~forward" />
            </Group>
            <Group $end>
              <Tools items="unlock chevron@14 info sun chevron@14 user" />
            </Group>
          </BottomBar>
        </Center>

        <RightRails>
          <Rail $side="right">
            {panelTabs.map((n) => <Tool key={n} name={n} w={35} h={35} active={n === 'layers'} />)}
          </Rail>
          <Rail $side="right">
            <Grip $across />
            {markupTop.map((n) => <Tool key={n} name={n} w={32} />)}
            <Grip $across />
            {markupRest.map((n) => <Tool key={n} name={n} w={32} />)}
          </Rail>
        </RightRails>
      </Body>

      <StatusBar>
        <StatusText>Ready</StatusText>
        <Spacer />
        <Tools items="grid snapGrid snapPage snapMarkup reuse sync chevron@18" />
        <StatusText $w={104}>Scale Not Set</StatusText>
        <StatusText $w={149}>34.00 x 22.00 in</StatusText>
        <StatusText $w={117}>(36.50, 13.61)</StatusText>
      </StatusBar>
    </Window>
  );
}
